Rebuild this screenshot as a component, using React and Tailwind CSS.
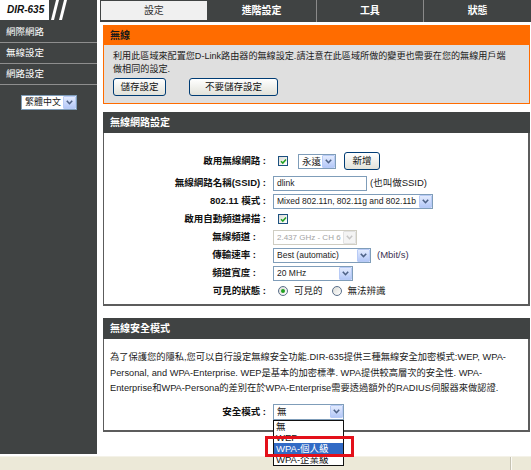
import React from 'react';

function Arrow({ disabled = false }) {
  if (disabled) {
    return (
      <span className="flex h-[13px] w-[13px] shrink-0 items-center justify-center rounded-[1px] border border-[#e2e2e2] bg-[#f4f4f4]">
        <svg width="7" height="5" viewBox="0 0 7 5">
          <path d="M0.8 0.8 L3.5 3.7 L6.2 0.8" fill="none" stroke="#c6c6c6" strokeWidth="1.5" />
        </svg>
      </span>
    );
  }
  return (
    <span className="flex h-[13px] w-[13px] shrink-0 items-center justify-center rounded-[1px] border border-[#b8cbf6] bg-linear-to-b from-[#e3ebfe] to-[#b4c8f7]">
      <svg width="7" height="5" viewBox="0 0 7 5">
        <path d="M0.8 0.8 L3.5 3.7 L6.2 0.8" fill="none" stroke="#4d6185" strokeWidth="1.6" />
      </svg>
    </span>
  );
}

function Select({ className = '', children, disabled = false, textClass = 'text-[8.5px]' }) {
  return (
    <div
      className={`flex h-[15px] items-center border bg-white pl-[3px] ${
        disabled ? 'border-[#cfcdc2] text-[#a3a3a3]' : 'border-[#7f9db9] text-[#222]'
      } ${className}`}
    >
      <span className={`flex-1 overflow-hidden whitespace-nowrap leading-[13px] ${textClass}`}>{children}</span>
      <Arrow disabled={disabled} />
    </div>
  );
}

function Checkbox() {
  return (
    <span className="inline-flex h-[10px] w-[10px] shrink-0 items-center justify-center border border-[#1c5180] bg-linear-to-br from-[#dcdcd7] to-white">
      <svg width="7" height="7" viewBox="0 0 7 7">
        <path d="M1 3.3 L2.8 5.1 L6 1.6" fill="none" stroke="#21a121" strokeWidth="1.5" />
      </svg>
    </span>
  );
}

function Radio({ checked = false }) {
  return (
    <span className="inline-flex h-[10px] w-[10px] shrink-0 items-center justify-center rounded-full border border-[#5a6f8a] bg-linear-to-br from-[#dcdcd7] to-white">
      {checked && <span className="h-[4px] w-[4px] rounded-full bg-[#21a121]" />}
    </span>
  );
}

function Btn({ className = '', children }) {
  return (
    <button
      type="button"
      className={`flex h-[18px] items-center justify-center rounded-[3px] border border-[#003c74] bg-linear-to-b from-white to-[#e2e2da] text-[9.5px] leading-none text-[#111] ${className}`}
    >
      {children}
    </button>
  );
}

function Row({ label, narrow = false, className = 'h-[18px]', children }) {
  return (
    <div className={`flex items-center ${className}`}>
      <div
        className={`w-[162px] shrink-0 whitespace-nowrap text-right text-[9.5px] font-bold leading-none text-[#111] ${
          narrow ? 'pr-[10px]' : ''
        }`}
      >
        {label}
        {'\u00a0:'}
      </div>
      <div className="ml-[7px] flex items-center">{children}</div>
    </div>
  );
}

function PanelHeader({ children }) {
  return (
    <div className="flex h-[21px] items-center bg-[#404343] pl-[7px] text-[10px] font-bold text-white">
      {children}
    </div>
  );
}

export default function App() {
  return (
    <div className="relative h-[470px] w-[531px] overflow-hidden bg-white text-[#1a1a1a] font-['Liberation_Sans','Noto_Sans_CJK_TC',sans-serif]">
      <div className="flex h-[456px]">
        {/* Sidebar */}
        <div className="flex h-[454px] w-[97px] shrink-0 flex-col bg-[#404343]">
          <div className="flex h-[22px] items-start">
            <div className="flex h-[20px] w-[49px] items-center bg-white pl-[7px] text-[10px] font-bold italic leading-none text-[#111]">
              DIR-635
            </div>
            <svg width="24" height="20" viewBox="0 0 24 20" className="shrink-0">
              <polygon points="2,20 5,20 10,0 7,0" fill="#ffffff" />
              <polygon points="10,20 13,20 18,0 15,0" fill="#ffffff" />
            </svg>
          </div>
          {['網際網路', '無線設定', '網路設定'].map((t) => (
            <div
              key={t}
              className="flex h-[21px] items-center border-b border-[#8e8e8e] pl-[6px] text-[9.5px] leading-none text-white"
            >
              {t}
            </div>
          ))}
          <div className="ml-[21px] mt-[10px] w-[56px]">
            <Select textClass="text-[9px]" className="h-[15px] pl-[2px]">
              繁體中文
            </Select>
          </div>
        </div>

        <div className="w-[3px] shrink-0 bg-white" />

        {/* Main column */}
        <div className="flex min-w-0 flex-1 flex-col">
          {/* Nav */}
          <div className="grid h-[22px] grid-cols-4 bg-[#404343] text-[10px] leading-none">
            <div className="p-[1px] pb-[2px]">
              <div className="flex h-full items-center justify-center bg-[#f0f0f0] text-[#333]">設定</div>
            </div>
            <div className="flex items-center justify-center font-bold text-white">進階設定</div>
            <div className="flex items-center justify-center border-l border-[#8a8a8a] font-bold text-white">工具</div>
            <div className="flex items-center justify-center border-l border-[#8a8a8a] font-bold text-white">狀態</div>
          </div>

          {/* Content */}
          <div className="flex flex-col pl-[3px] pr-[1px]">
            {/* Panel 1 */}
            <div className="mt-[3px]">
              <div className="flex h-[20px] items-center bg-[#ff6c00] pl-[7px] text-[10px] font-bold text-[#1a1a1a]">
                無線
              </div>
              <div className="h-[59px] border border-t-0 border-[#ff6c00] bg-[#dfdfdf] pl-[9px] pt-[5px]">
                <div className="whitespace-nowrap text-[9.1px] leading-[13px] text-[#1a1a1a]">
                  利用此區域來配置您D-Link路由器的無線設定.請注意在此區域所做的變更也需要在您的無線用戶端
                  <br />
                  做相同的設定.
                </div>
                <div className="mt-[2px] flex gap-[23px]">
                  <Btn className="w-[53px]">儲存設定</Btn>
                  <Btn className="w-[89px]">不要儲存設定</Btn>
                </div>
              </div>
            </div>

            {/* Panel 2 */}
            <div className="mt-[8px]">
              <PanelHeader>無線網路設定</PanelHeader>
              <div className="flex h-[173px] flex-col border-b-2 border-l border-r-2 border-[#5c5c5c] pt-[18px]">
                <Row label="啟用無線網路" className="h-[20px]">
                  <span className="ml-[5px] flex">
                    <Checkbox />
                  </span>
                  <Select className="ml-[10px] w-[38px]" textClass="text-[9.5px]">
                    永遠
                  </Select>
                  <Btn className="ml-[8px] w-[36px]">新增</Btn>
                </Row>
                <Row label="無線網路名稱(SSID)" className="mt-[3px] h-[18px]">
                  <div className="flex h-[15px] w-[94px] items-center border border-[#7f9db9] bg-white pl-[3px] text-[8.5px] leading-none text-[#222]">
                    dlink
                  </div>
                  <span className="ml-[3px] whitespace-nowrap text-[9.5px] leading-none">(也叫做SSID)</span>
                </Row>
                <Row label="802.11 模式">
                  <Select className="w-[160px]">Mixed 802.11n, 802.11g and 802.11b</Select>
                </Row>
                <Row label="啟用自動頻道掃描">
                  <span className="ml-[5px] flex">
                    <Checkbox />
                  </span>
                </Row>
                <Row label="無線頻道" narrow>
                  <Select disabled className="w-[84px] pl-[2px]" textClass="text-[8px]">
                    2.437 GHz - CH 6
                  </Select>
                </Row>
                <Row label="傳輸速率" narrow>
                  <Select className="w-[98px]">Best (automatic)</Select>
                  <span className="ml-[6px] whitespace-nowrap text-[9.5px] leading-none text-[#3a3150]">(Mbit/s)</span>
                </Row>
                <Row label="頻道寬度" narrow>
                  <Select className="w-[80px]">20 MHz</Select>
                </Row>
                <Row label="可見的狀態">
                  <span className="ml-[5px] flex">
                    <Radio checked />
                  </span>
                  <span className="ml-[6px] whitespace-nowrap text-[9.5px] leading-none">可見的</span>
                  <span className="ml-[9px] flex">
                    <Radio />
                  </span>
                  <span className="ml-[6px] whitespace-nowrap text-[9.5px] leading-none">無法辨識</span>
                </Row>
              </div>
            </div>

            {/* Panel 3 */}
            <div className="mt-[12px]">
              <PanelHeader>無線安全模式</PanelHeader>
              <div className="flex h-[93px] flex-col border-b-2 border-l border-r-2 border-[#5c5c5c] pt-[11px]">
                <div className="whitespace-nowrap pl-[6px] text-[9.25px] leading-[15.5px] text-[#1a1a1a]">
                  為了保護您的隱私,您可以自行設定無線安全功能.DIR-635提供三種無線安全加密模式:WEP, WPA-
                  <br />
                  Personal, and WPA-Enterprise. WEP是基本的加密標準. WPA提供較高層次的安全性. WPA-
                  <br />
                  Enterprise和WPA-Persona的差別在於WPA-Enterprise需要透過額外的RADIUS伺服器來做認證.
                </div>
                <Row label="安全模式" className="mt-[7px] h-[16px]">
                  <Select className="h-[16px] w-[71px]" textClass="text-[9.5px]">
                    無
                  </Select>
                </Row>
              </div>
            </div>
          </div>
        </div>
      </div>

      {/* Bottom status strip */}
      <div className="flex h-[14px] border-t border-[#f4f2e8] bg-[#ece9d8]">
        <div className="ml-[510px] h-full w-[2px] border-l border-r border-l-[#c5c2b2] border-r-[#fbfaf5]" />
      </div>

      {/* Open dropdown list */}
      <div className="absolute left-[273px] top-[420px] w-[71px] border border-[#111] bg-white text-[9.5px] leading-[11px] text-[#111]">
        <div className="h-[11px] pl-[2px]">無</div>
        <div className="h-[11px] pl-[2px]">WEP</div>
        <div className="h-[11px] bg-[#316ac5] pl-[2px] text-white">WPA-個人級</div>
        <div className="h-[11px] pl-[2px]">WPA-企業級</div>
      </div>

      {/* Red highlight box */}
      <div className="absolute left-[265px] top-[436px] h-[21px] w-[89px] border-[3px] border-[#e3101a]" />
    </div>
  );
}
